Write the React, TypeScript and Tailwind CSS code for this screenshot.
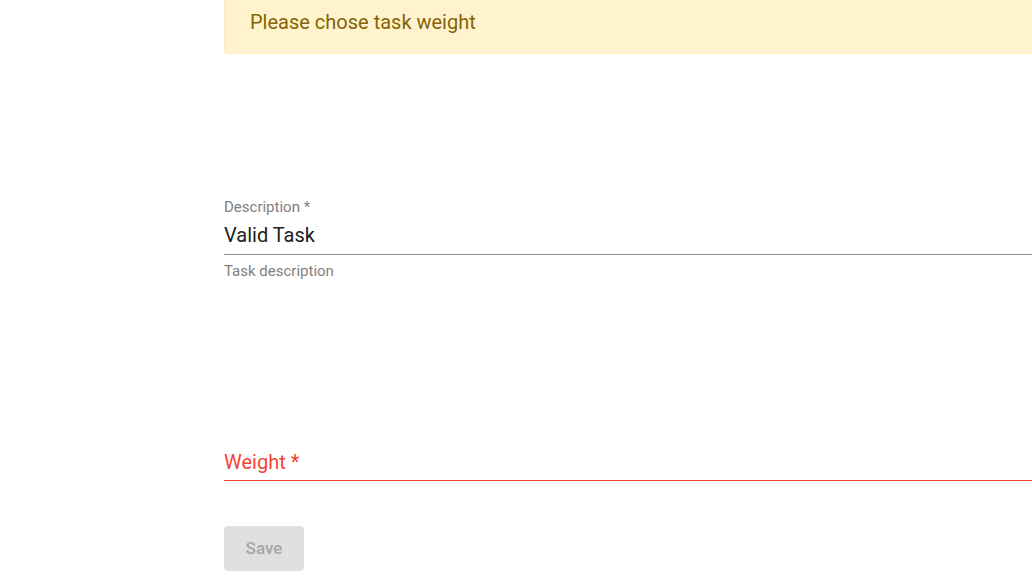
import React from 'react';

const App: React.FC = () => {
  return (
    <div className="h-[576px] w-[1032px] overflow-hidden bg-white font-['Roboto',sans-serif]">
      <div className="ml-[224px] w-[900px]">
        <div className="flex h-[54px] items-end rounded-bl-[4px] border-x border-b border-[#ffeeba] bg-[#fff3cd] pb-[19px] pl-[25px]">
          <span className="text-[20px] leading-[23px] text-[#856404]">Please chose task weight</span>
        </div>

        <div className="mt-[145px]">
          <label className="block text-[15px] leading-[17px] text-[#808080]">Description *</label>
          <div className="mt-[7px] pb-[7px] text-[20px] leading-[24px] text-[#212121]">Valid Task</div>
          <div className="h-px bg-[#8f8f8f]" />
          <p className="mt-[8px] text-[15px] leading-[17px] text-[#808080]">Task description</p>
        </div>

        <div className="mt-[170px] pb-[6px] text-[20px] leading-[24px] text-[#f44336]">Weight *</div>
        <div className="h-px bg-[#f44336]" />

        <button
          disabled
          className="mt-[45px] flex h-[45px] w-[80px] items-center justify-center rounded-[4px] bg-[#e0e0e0] pt-px text-[17px] font-medium text-[#a6a6a6]"
        >
          Save
        </button>
      </div>
    </div>
  );
};

export default App;
